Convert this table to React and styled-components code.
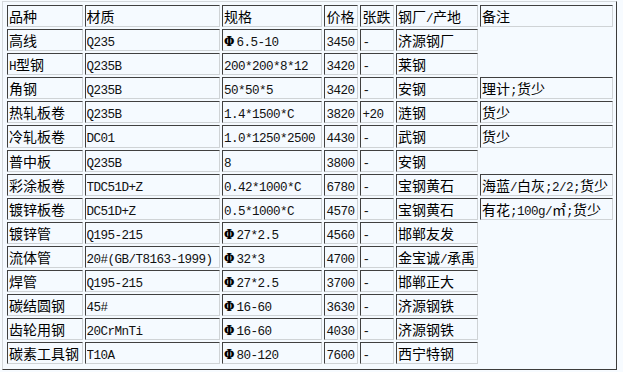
import React from 'react'
import styled, { createGlobalStyle } from 'styled-components'

const Global = createGlobalStyle`
  html, body {
    margin: 0;
    background: #f7fbff;
  }
`

const Page = styled.div`
  padding: 1px 0 0 2px;
`

const Frame = styled.div`
  width: 610px;
  border: 1px solid #3c3c3c;
  border-top-color: #d4d8dc;
  border-left-color: #d4d8dc;
  padding: 1px 1px 3px 2px;
  background: #f5faff;
`

const Table = styled.table`
  border-collapse: separate;
  border-spacing: 2px;
  table-layout: fixed;
  empty-cells: hide;
  font-family: "Noto Sans CJK SC", "Liberation Sans", sans-serif;
  font-size: 14px;
  color: #000;
`

const Cell = styled.td`
  width: ${p => p.$w}px;
  padding: 0 1px;
  border: 1px solid #404040;
  border-right-color: #cfd3d6;
  border-bottom-color: #cfd3d6;
  white-space: nowrap;
  overflow: hidden;
  vertical-align: middle;
`

const Box = styled.div`
  height: ${p => p.$h}px;
  line-height: ${p => p.$h}px;
  overflow: hidden;
`

const Lat = styled.span`
  font-family: "Liberation Mono", "DejaVu Sans Mono", monospace;
  font-size: 12.6px;
  letter-spacing: -0.56px;
  color: #111;
`

const Phi = styled.span`
  font-family: "DejaVu Serif", serif;
  font-size: 12px;
  font-weight: bold;
  margin-right: 2px;
`

const widths = [73, 137, 102, 32, 31, 79, 132]

const rows = [
  ['品种', '材质', '规格', '价格', '张跌', '钢厂/产地', '备注'],
  ['高线', 'Q235', 'Φ6.5-10', '3450', '-', '济源钢厂', ''],
  ['H型钢', 'Q235B', '200*200*8*12', '3420', '-', '莱钢', ''],
  ['角钢', 'Q235B', '50*50*5', '3420', '-', '安钢', '理计;货少'],
  ['热轧板卷', 'Q235B', '1.4*1500*C', '3820', '+20', '涟钢', '货少'],
  ['冷轧板卷', 'DC01', '1.0*1250*2500', '4430', '-', '武钢', '货少'],
  ['普中板', 'Q235B', '8', '3800', '-', '安钢', ''],
  ['彩涂板卷', 'TDC51D+Z', '0.42*1000*C', '6780', '-', '宝钢黄石', '海蓝/白灰;2/2;货少'],
  ['镀锌板卷', 'DC51D+Z', '0.5*1000*C', '4570', '-', '宝钢黄石', '有花;100g/㎡;货少'],
  ['镀锌管', 'Q195-215', 'Φ27*2.5', '4560', '-', '邯郸友发', ''],
  ['流体管', '20#(GB/T8163-1999)', 'Φ32*3', '4700', '-', '金宝诚/承禹', ''],
  ['焊管', 'Q195-215', 'Φ27*2.5', '3700', '-', '邯郸正大', ''],
  ['碳结圆钢', '45#', 'Φ16-60', '3630', '-', '济源钢铁', ''],
  ['齿轮用钢', '20CrMnTi', 'Φ16-60', '4030', '-', '济源钢铁', ''],
  ['碳素工具钢', 'T10A', 'Φ80-120', '7600', '-', '西宁特钢', ''],
]

// split text into runs so latin gets the narrow mono face
function Text({ value }) {
  const parts = value.split(/(Φ|[\x21-\x7e]+)/).filter(Boolean)
  return parts.map((s, i) => {
    if (s === 'Φ') return <Phi key={i}>Φ</Phi>
    if (/^[\x21-\x7e]+$/.test(s)) return <Lat key={i}>{s}</Lat>
    return <React.Fragment key={i}>{s}</React.Fragment>
  })
}

export default function App() {
  return (
    <Page>
      <Global />
      <Frame>
        <Table>
          <tbody>
            {rows.map((r, i) => (
              <tr key={i}>
                {r.map((c, j) => (
                  <Cell key={j} $w={widths[j]}>
                    {c ? (
                      <Box $h={i === 5 ? 21 : 20}>
                        <Text value={c} />
                      </Box>
                    ) : null}
                  </Cell>
                ))}
              </tr>
            ))}
          </tbody>
        </Table>
      </Frame>
    </Page>
  )
}
